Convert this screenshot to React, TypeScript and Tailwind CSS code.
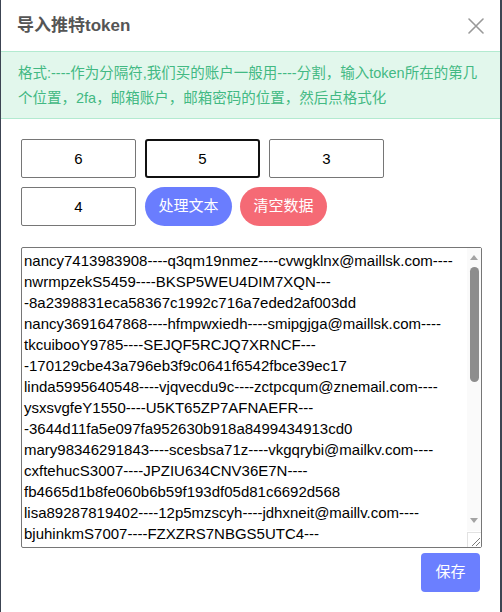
import React from 'react';

const tokenText = [
  'nancy7413983908----q3qm19nmez----cvwgklnx@maillsk.com----',
  'nwrmpzekS5459----BKSP5WEU4DIM7XQN---',
  '-8a2398831eca58367c1992c716a7eded2af003dd',
  'nancy3691647868----hfmpwxiedh----smipgjga@maillsk.com----',
  'tkcuibooY9785----SEJQF5RCJQ7XRNCF---',
  '-170129cbe43a796eb3f9c0641f6542fbce39ec17',
  'linda5995640548----vjqvecdu9c----zctpcqum@znemail.com----',
  'ysxsvgfeY1550----U5KT65ZP7AFNAEFR---',
  '-3644d11fa5e097fa952630b918a8499434913cd0',
  'mary98346291843----scesbsa71z----vkgqrybi@mailkv.com----',
  'cxftehucS3007----JPZIU634CNV36E7N----',
  'fb4665d1b8fe060b6b59f193df05d81c6692d568',
  'lisa89287819402----12p5mzscyh----jdhxneit@maillv.com----',
  'bjuhinkmS7007----FZXZRS7NBGS5UTC4---',
  '-5d0c1e9a7b3f28e64a91c07d2b5e8f134a6c9d72',
  'emma48120957316----k7wq2xhfpd----tbnzqamr@maillsk.com----',
  'pqzrfowdS2248----HQ4VMN7ZKE2RLD5T---',
  '-a91f0c3e7d2b58640f1c9e3a7b2d64e08c5f1a93',
  'sarah7502168493----m3tzqvkcye----wlxpjdug@znemail.com----',
  'gvhcnoteY6631----R7NBW2KQ5ZPT3XHA---',
  '-0e7c4a19b2d6f8530c1a9e74d3b2f6085e1c9a47',
  'kate62039518427----z8vbnqrtws----hmcxkeyo@mailkv.com----',
  'ufrdlimsS4410----DG6TQW3XPC8ZNM2E---',
  '-3b7f90e2c6a14d58e9b03c7a2f1d64e5b08a9c13',
  'anna91756320841----p2xdjmfqlo----rzuvtnsi@maillv.com----',
  'lwkeqbyaY8802----KX5HPR9TMV2QZL6N---',
  '-c4e8a1f07b3d2965e0a4c8f17b2d3e96a5c0f148',
  'julia3384019276----w9hskyzcbe----fqndgoxm@maillsk.com----',
  'mobtsrjeS1195----TB8ZNC4WXQ7PMH3D---',
  '-7f2c9e04a1b8d3560e7c2f9a14b6d83e0c5a7f21',
].join('\n');

const CloseIcon = () => (
  <svg width="16" height="16" viewBox="0 0 16 16" fill="none">
    <path d="M1 1L15 15M15 1L1 15" stroke="#999" strokeWidth="1.6" strokeLinecap="round" />
  </svg>
);

// the browser here hides native scrollbars, so the textarea's bar is drawn on top
const FakeScrollbar = () => (
  <>
    <div className="pointer-events-none absolute right-[1px] top-[1px] flex h-[283px] w-[14px] flex-col items-center bg-[#fafafa] pt-[7px] pb-[8px]">
      <svg width="8" height="5" viewBox="0 0 8 5">
        <path d="M0 5L4 0L8 5Z" fill="#a3a3a3" />
      </svg>
      <div className="mt-[7px] h-[115px] w-[9px] rounded-full bg-[#8d8d8d]" />
      <div className="flex-1" />
      <svg width="8" height="5" viewBox="0 0 8 5">
        <path d="M0 0L8 0L4 5Z" fill="#a3a3a3" />
      </svg>
    </div>
    <div className="pointer-events-none absolute bottom-[1px] right-[1px] h-[15px] w-[14px] border-l border-t border-[#e2e2e2] bg-white">
      <svg width="13" height="14" viewBox="0 0 13 14" className="block">
        <path d="M12 5L4 13M12 9L8 13" stroke="#7a7a7a" strokeWidth="1" />
      </svg>
    </div>
  </>
);

const App: React.FC = () => {
  return (
    <div
      className="flex h-[612px] w-[502px] bg-[#3c4452] pl-[1px] pr-[2px]"
      style={{ fontFamily: '"Liberation Sans", "Noto Sans CJK SC", sans-serif' }}
    >
      <div className="flex h-full w-full flex-col bg-white">
        {/* header */}
        <div className="flex h-[51px] items-center justify-between pl-[16px] pr-[16px]">
          <h3 className="text-[17px] font-bold text-[#555]">导入推特token</h3>
          <CloseIcon />
        </div>

        {/* tips */}
        <div className="border-y border-[#b3ead0] bg-[#e2f7ec] px-[17px] pb-[7px] pt-[9px] text-[14.5px] leading-[25px] text-[#42b983]">
          格式:----作为分隔符,我们买的账户一般用----分割，输入token所在的第几个位置，2fa，邮箱账户，邮箱密码的位置，然后点格式化
        </div>

        <div className="flex flex-col px-[20px] pt-[20px]">
          <div className="flex w-[370px] flex-wrap gap-x-[9px] gap-y-[9px]">
            <input
              defaultValue="6"
              className="h-[39px] w-[115px] rounded-[2px] border border-[#767676] text-center text-[15px] text-black outline-none"
            />
            <input
              defaultValue="5"
              className="h-[39px] w-[115px] rounded-[3px] border-2 border-[#111] text-center text-[15px] text-black outline-none"
            />
            <input
              defaultValue="3"
              className="h-[39px] w-[115px] rounded-[2px] border border-[#767676] text-center text-[15px] text-black outline-none"
            />
            <input
              defaultValue="4"
              className="h-[39px] w-[115px] rounded-[2px] border border-[#767676] text-center text-[15px] text-black outline-none"
            />
            <button className="h-[39px] w-[87px] rounded-full bg-[#6a7dfe] text-[15px] text-white">
              处理文本
            </button>
            <button className="-ml-[1px] h-[39px] w-[87px] rounded-full bg-[#f56a75] text-[15px] text-white">
              清空数据
            </button>
          </div>

          <div className="relative mt-[21px] h-[301px] w-[461px]">
            <textarea
              defaultValue={tokenText}
              className="block h-full w-full resize-none overflow-hidden rounded-[2px] border border-[#767676] py-[2px] pl-[2px] pr-[18px] text-[15px] leading-[21px] text-black outline-none"
              style={{ fontFamily: '"Liberation Sans", "Noto Sans CJK SC", sans-serif' }}
            />
            <FakeScrollbar />
          </div>

          <div className="flex justify-end">
            <button className="mt-[5px] h-[39px] w-[59px] rounded-[4px] bg-[#6b7fff] text-[15px] text-white">
              保存
            </button>
          </div>
        </div>
      </div>
    </div>
  );
};

export default App;
